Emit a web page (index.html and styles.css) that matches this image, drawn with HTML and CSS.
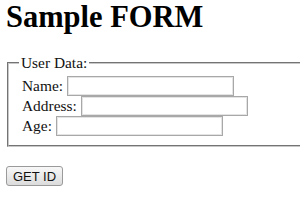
FILE: index.html
```html
<!DOCTYPE html>
<html>
<head>
<meta charset="utf-8">
<title>Sample FORM</title>
<link rel="stylesheet" href="styles.css">
</head>
<body>
<div class="page">
  <h1 class="title">Sample FORM</h1>
  <form class="form">
    <fieldset class="group">
      <legend class="legend">User Data:</legend>
      <div class="row"><label class="lbl">Name:</label> <input class="field" type="text"></div>
      <div class="row"><label class="lbl">Address:</label> <input class="field" type="text"></div>
      <div class="row"><label class="lbl">Age:</label> <input class="field" type="text"></div>
    </fieldset>
    <button class="btn" type="button">GET ID</button>
  </form>
</div>
</body>
</html>
```
FILE: styles.css
```css
html, body {
  margin: 0;
  padding: 0;
  overflow: hidden;
  background: #fff;
}
.page {
  padding: 0 0 0 6px;
  font-family: "Liberation Serif", "Times New Roman", serif;
  color: #111;
}
.title {
  margin: 0;
  font-size: 30.5px;
  line-height: 34px;
  font-weight: bold;
  color: #000;
}
.form {
  margin: 0;
}
.group {
  width: 320px;
  margin: 20px 0 0 1px;
  padding: 4px 13px 9px 13px;
  border: 2px groove #c8c8c8;
  font-size: 15.4px;
}
.legend {
  padding: 0 2px;
  margin-left: -3px;
  line-height: 18px;
}
.row {
  display: flex;
  align-items: center;
  gap: 4px;
  height: 20px;
  line-height: 20px;
}
.lbl {
  white-space: nowrap;
}
.field {
  box-sizing: border-box;
  width: 167px;
  height: 20px;
  margin: 0;
  padding: 0;
  border: 1px solid #a8a8a8;
  box-shadow: inset 0 0 0 1px #e4e4e4;
  background: #fff;
}
.btn {
  display: block;
  box-sizing: border-box;
  margin: 19px 0 0 0;
  width: 57px;
  height: 20px;
  padding: 0;
  font-family: "Liberation Sans", Arial, sans-serif;
  font-size: 13px;
  color: #111;
  border: 1px solid #9a9a9a;
  border-radius: 3px;
  background: linear-gradient(#f8f8f8, #dcdcdc);
}
```
